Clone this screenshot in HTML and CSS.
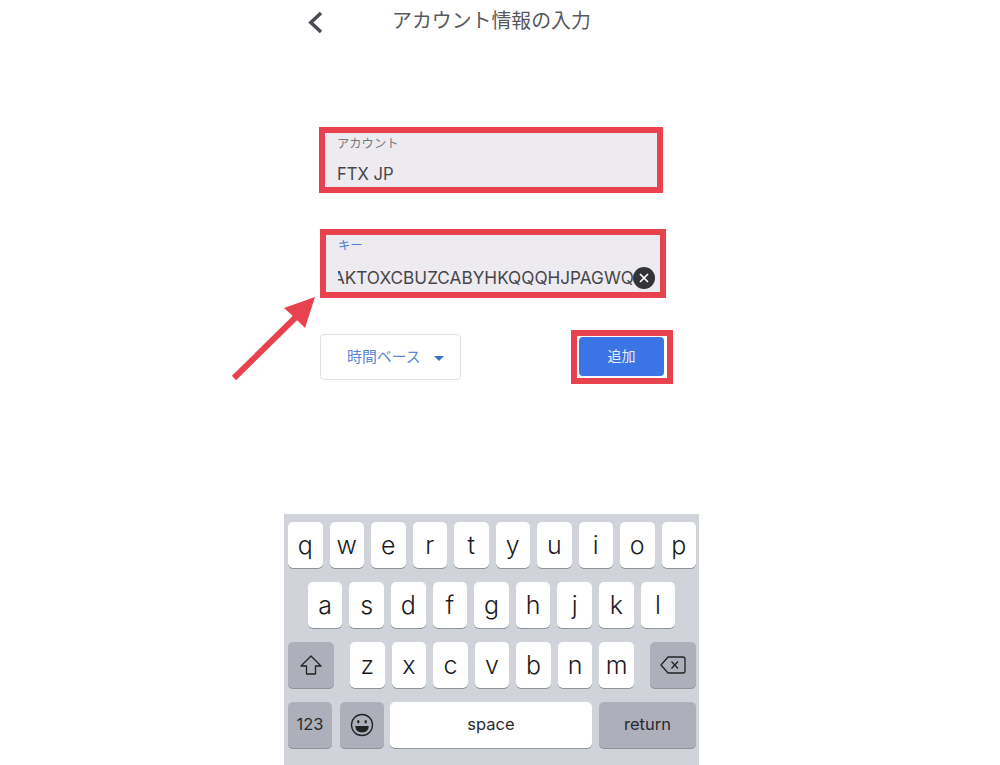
FILE: index.html
```html
<!DOCTYPE html>
<html lang="ja">
<head>
    <meta charset="UTF-8">
    <meta name="viewport" content="width=device-width, initial-scale=1.0">
    <title>アカウント情報の入力</title>
    <link rel="stylesheet" href="styles.css">
</head>
<body>
    <div class="phone">
        <header class="top-bar">
            <svg class="back-icon" width="16" height="24" viewBox="0 0 16 24">
                <path d="M14 2 L3.8 11.5 L14 21" fill="none" stroke="#474a50" stroke-width="3.5"/>
            </svg>
            <h1 class="title">アカウント情報の入力</h1>
        </header>

        <main class="form">
            <div class="field field-account">
                <label class="field-label">アカウント</label>
                <div class="field-value">FTX JP</div>
            </div>

            <div class="field field-key">
                <label class="field-label label-active">キー</label>
                <div class="key-row">
                    <div class="key-clip"><span>AKTOXCBUZCABYHKQQQHJPAGWQ</span></div>
                    <span class="clear-btn">
                        <svg width="10" height="10" viewBox="0 0 10 10">
                            <path d="M1 1 L9 9 M9 1 L1 9" stroke="#fff" stroke-width="1.7"/>
                        </svg>
                    </span>
                </div>
            </div>

            <div class="actions">
                <button class="type-select">時間ベース<span class="caret"></span></button>
                <div class="add-frame"><button class="add-btn">追加</button></div>
            </div>

            <!-- 注釈の矢印 -->
            <svg class="arrow" width="90" height="90" viewBox="0 0 90 90">
                <path d="M5 86 L68 24" stroke="#e8424e" stroke-width="6"/>
                <polygon points="86,5 76,36 66,26 55,16" fill="#e8424e"/>
            </svg>
        </main>

        <section class="keyboard">
            <div class="kb-row">
                <span class="key">q</span><span class="key">w</span><span class="key">e</span><span class="key">r</span><span class="key">t</span><span class="key">y</span><span class="key">u</span><span class="key">i</span><span class="key">o</span><span class="key">p</span>
            </div>
            <div class="kb-row kb-center">
                <span class="key">a</span><span class="key">s</span><span class="key">d</span><span class="key">f</span><span class="key">g</span><span class="key">h</span><span class="key">j</span><span class="key">k</span><span class="key">l</span>
            </div>
            <div class="kb-row kb-between">
                <span class="key key-gray key-side">
                    <svg width="24" height="22" viewBox="0 0 24 22">
                        <path d="M12 2 L22 12 H16.5 V20 H7.5 V12 H2 Z" fill="none" stroke="#222" stroke-width="1.3" stroke-linejoin="round"/>
                    </svg>
                </span>
                <div class="kb-letters">
                    <span class="key">z</span><span class="key">x</span><span class="key">c</span><span class="key">v</span><span class="key">b</span><span class="key">n</span><span class="key">m</span>
                </div>
                <span class="key key-gray key-side">
                    <svg width="26" height="20" viewBox="0 0 26 20">
                        <path d="M8 2 H23 Q25 2 25 4 V16 Q25 18 23 18 H8 L1 10 Z" fill="none" stroke="#222" stroke-width="1.3" stroke-linejoin="round"/>
                        <path d="M11.5 6.5 L18 13.5 M18 6.5 L11.5 13.5" stroke="#222" stroke-width="1.3"/>
                    </svg>
                </span>
            </div>
            <div class="kb-row kb-bottom">
                <span class="key key-gray key-num">123</span>
                <span class="key key-gray key-emoji">
                    <svg width="24" height="24" viewBox="0 0 24 24">
                        <circle cx="12" cy="12" r="10.5" fill="none" stroke="#222" stroke-width="1.3"/>
                        <ellipse cx="8.3" cy="8.8" rx="1.2" ry="1.8" fill="#222"/>
                        <ellipse cx="15.7" cy="8.8" rx="1.2" ry="1.8" fill="#222"/>
                        <path d="M5.2 13 H18.8 Q18.4 19.5 12 19.5 Q5.6 19.5 5.2 13 Z" fill="#222"/>
                    </svg>
                </span>
                <span class="key key-space">space</span>
                <span class="key key-gray key-return">return</span>
            </div>
        </section>
    </div>
</body>
</html>
```

FILE: styles.css
```css
* {
    margin: 0;
    padding: 0;
    box-sizing: border-box;
}
body {
    background: #fff;
    font-family: "Inter", "Noto Sans CJK JP", sans-serif;
    color: #444;
    overflow: hidden;
}
.phone {
    width: 415px;
    height: 765px;
    margin-left: 284px;
    display: flex;
    flex-direction: column;
}

/* ヘッダー */
.top-bar {
    height: 127px;
    padding: 10px 0 0 23px;
    display: flex;
    align-items: flex-start;
}
.back-icon {
    margin-top: 1px;
}
.title {
    margin-top: -1px;
    margin-left: 69px;
    font-size: 19.9px;
    line-height: 24px;
    font-weight: 400;
    color: #58595e;
}

/* フォーム */
.form {
    position: relative;
    flex: 1;
    padding-left: 35px;
}
.field {
    background: #edebf0;
    border: 6px solid #e8424e;
    padding: 3px 0 0 12px;
}
.field-account {
    width: 344px;
    height: 66px;
    margin-bottom: 36px;
}
.field-key {
    width: 346px;
    height: 69px;
    margin-left: 1px;
    margin-bottom: 32px;
}
.field-label {
    display: block;
    font-size: 12.3px;
    line-height: 16px;
    color: #77767c;
}
.label-active {
    color: #4a7fdc;
}
.field-value {
    margin-top: 12px;
    font-size: 16.6px;
    line-height: 20px;
    color: #46464a;
}
.key-row {
    margin-top: 13px;
    display: flex;
    align-items: center;
}
.key-clip {
    width: 296px;
    display: flex;
    justify-content: flex-end;
    overflow: hidden;
    white-space: nowrap;
    font-size: 17.2px;
    line-height: 20px;
    color: #46464a;
}
.clear-btn {
    flex: none;
    width: 22px;
    height: 22px;
    margin-left: -1px;
    border-radius: 50%;
    background: #333437;
    display: flex;
    align-items: center;
    justify-content: center;
}
.actions {
    width: 353px;
    display: flex;
    align-items: center;
    justify-content: space-between;
    margin-left: 1px;
}
.type-select {
    width: 141px;
    height: 46px;
    padding: 0 0 4px 26px;
    display: flex;
    align-items: center;
    background: #fff;
    border: 1px solid #e0e1e6;
    border-radius: 4px;
    font-family: inherit;
    font-size: 14.9px;
    color: #5b86d6;
}
.caret {
    margin-left: 13px;
    margin-top: 6px;
    border-top: 5px solid #3f70cf;
    border-left: 5px solid transparent;
    border-right: 5px solid transparent;
}
.add-frame {
    width: 102px;
    height: 54px;
    padding: 1px 3px 2px 2px;
    border: 6px solid #e8424e;
    background: #fff;
}
.add-btn {
    display: block;
    width: 85px;
    height: 39px;
    padding-bottom: 4px;
    border: none;
    border-radius: 4px;
    background: #3b74e4;
    font-family: inherit;
    font-size: 14px;
    color: #e6eefb;
}
.arrow {
    position: absolute;
    left: -55px;
    top: 165px;
}

/* キーボード */
.keyboard {
    height: 251px;
    padding: 8px 3px 0 4px;
    background: #d1d3da;
    display: flex;
    flex-direction: column;
    gap: 14px;
}
.kb-row {
    height: 46px;
    display: flex;
    gap: 7px;
}
.kb-center {
    justify-content: center;
    padding-right: 1px;
}
.kb-between {
    justify-content: space-between;
}
.kb-letters {
    display: flex;
    gap: 7px;
}
.key {
    width: 34.6px;
    height: 46px;
    display: flex;
    align-items: center;
    justify-content: center;
    background: #fff;
    border-radius: 5px;
    box-shadow: 0 1px 0 #8f9299;
    font-size: 25px;
    font-weight: 300;
    color: #1c1c1e;
}
.key-gray {
    background: #adb0bb;
}
.key-side {
    width: 46px;
}
.kb-bottom .key {
    padding-bottom: 2px;
    font-size: 16.5px;
    font-weight: 400;
    color: #2a2a2c;
}
.key-num,
.key-emoji {
    width: 44px;
}
.key-emoji {
    margin-left: 1px;
    margin-right: -1px;
}
.kb-bottom .key-emoji {
    padding-bottom: 0;
}
.key-space {
    width: 202px;
}
.key-return {
    width: 97px;
}
```
